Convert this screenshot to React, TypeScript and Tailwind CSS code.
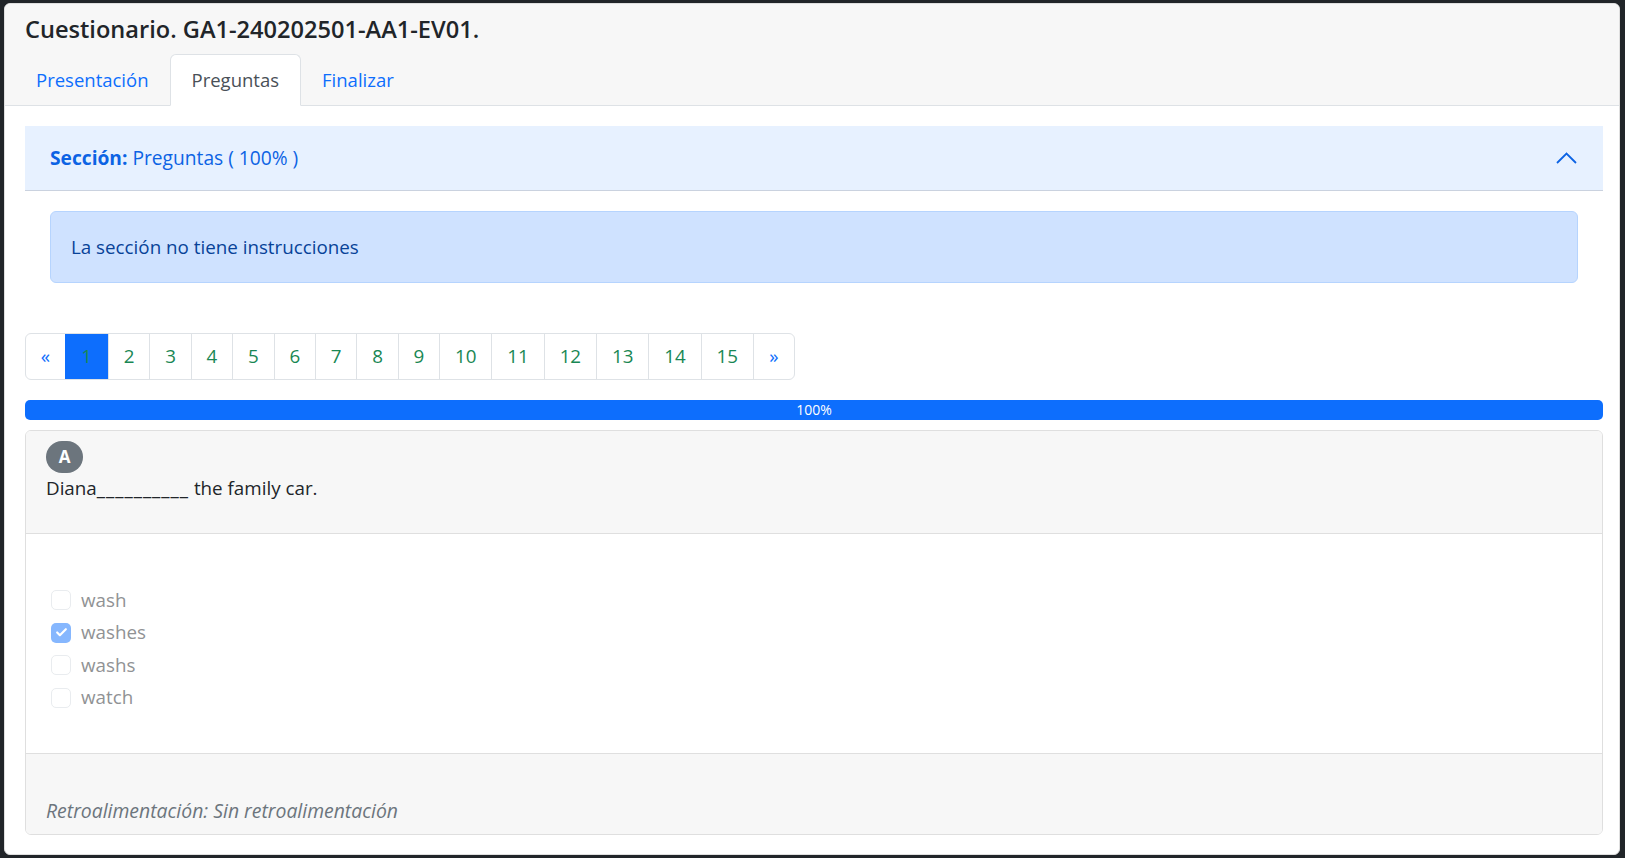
import { Check } from "lucide-react";

const pages = ["1", "2", "3", "4", "5", "6", "7", "8", "9", "10", "11", "12", "13", "14", "15"];

const options = [
  { label: "wash", checked: false },
  { label: "washes", checked: true },
  { label: "washs", checked: false },
  { label: "watch", checked: false },
];

export default function App() {
  return (
    <div className="h-screen bg-[#212529] pt-[3px] pl-[4px] pr-[5px] pb-[3px] font-['Open_Sans',sans-serif] text-[18.8px] text-[#212529]">
      <div className="h-full flex flex-col bg-white rounded-[6px] border border-[#dfdfdf] overflow-hidden">
        {/* Header with tabs */}
        <div className="bg-[#f7f7f7] border-b border-[#dee2e6] pt-[10px] px-[20px]">
          <h5 className="h-[30px] leading-[30px] text-[23.6px] font-semibold text-[#212529]">
            Cuestionario. GA1-240202501-AA1-EV01.
          </h5>
          <div className="flex mt-[10px] -ml-[10px] -mb-px text-[18.5px]">
            <a className="px-[20px] h-[52px] leading-[50px] text-[#0d6efd] border border-transparent">Presentación</a>
            <a className="px-[21px] h-[52px] leading-[50px] text-[#495057] bg-white border border-[#dee2e6] border-b-white rounded-t-[6px]">
              Preguntas
            </a>
            <a className="px-[20px] h-[52px] leading-[50px] text-[#0d6efd] border border-transparent">Finalizar</a>
          </div>
        </div>

        {/* Body */}
        <div className="flex-1 flex flex-col pt-[20px] pb-[19px] pl-[20px] pr-[16px]">
          {/* Section accordion */}
          <div className="h-[65px] flex items-center justify-between bg-[#e7f1ff] border-b border-[#cad2df] pl-[25px] pr-[26px] text-[#0c63e4]">
            <div className="text-[19.2px]">
              <span className="font-bold">Sección:</span> Preguntas ( 100% )
            </div>
            <svg width="21" height="12" viewBox="0 0 21 12" fill="none">
              <polyline points="1,11 10.5,1.5 20,11" stroke="#0c63e4" strokeWidth="1.8" />
            </svg>
          </div>
          <div className="px-[25px] py-[20px]">
            <div className="h-[72px] flex items-center px-[20px] bg-[#cfe2ff] border border-[#b6d4fe] rounded-[6px] text-[#084298]">
              La sección no tiene instrucciones
            </div>
          </div>

          {/* Pagination */}
          <div className="mt-[30px] flex">
            <div className="flex h-[47px] border border-[#dee2e6] rounded-[6px] overflow-hidden">
              <div className="w-[39px] flex items-center justify-center text-[#0d6efd]">«</div>
              {pages.map((p, i) => (
                <div
                  key={p}
                  className={
                    i === 0
                      ? "w-[43px] flex items-center justify-center bg-[#0d6efd] text-[#198754]"
                      : p.length === 1
                        ? "w-[41.4px] flex items-center justify-center border-l border-[#dee2e6] text-[#198754]"
                        : "w-[52.3px] flex items-center justify-center border-l border-[#dee2e6] text-[#198754]"
                  }
                >
                  {p}
                </div>
              ))}
              <div className="w-[41px] flex items-center justify-center border-l border-[#dee2e6] text-[#0d6efd]">»</div>
            </div>
          </div>

          {/* Progress */}
          <div className="mt-[20px] h-[20px] rounded-[5px] bg-[#0d6efd] flex items-center justify-center text-white text-[14px] leading-none">
            100%
          </div>

          {/* Question card */}
          <div className="mt-[10px] flex-1 flex flex-col border border-[#dfdfdf] rounded-[6px] overflow-hidden">
            <div className="bg-[#f7f7f7] border-b border-[#dfdfdf] pt-[10px] pb-[30px] px-[20px]">
              <span className="inline-flex items-center justify-center w-[37px] h-[32px] rounded-full bg-[#6c757d] text-white text-[17px] font-bold">
                A
              </span>
              <p className="leading-[30px]">
                Diana<span className="tracking-[1px]">__________</span> the family car.
              </p>
            </div>
            <div className="h-[219px] pt-[51px] px-[25px] flex flex-col gap-[2.5px]">
              {options.map((o) => (
                <label key={o.label} className="flex items-center h-[30px] text-[#909294]">
                  <span
                    className={
                      o.checked
                        ? "w-[20px] h-[20px] rounded-[5px] bg-[#86b7fe] flex items-center justify-center mr-[10px]"
                        : "w-[20px] h-[20px] rounded-[5px] border border-[#e9ecef] bg-white mr-[10px]"
                    }
                  >
                    {o.checked && <Check className="w-[13px] h-[13px] text-white" strokeWidth={4} />}
                  </span>
                  {o.label}
                </label>
              ))}
            </div>
            <div className="flex-1 bg-[#f7f7f7] border-t border-[#dfdfdf] px-[20px] pt-[42px]">
              <p className="leading-[30px] italic text-[19.4px] text-[#6c757d]">Retroalimentación: Sin retroalimentación</p>
            </div>
          </div>
        </div>
      </div>
    </div>
  );
}
